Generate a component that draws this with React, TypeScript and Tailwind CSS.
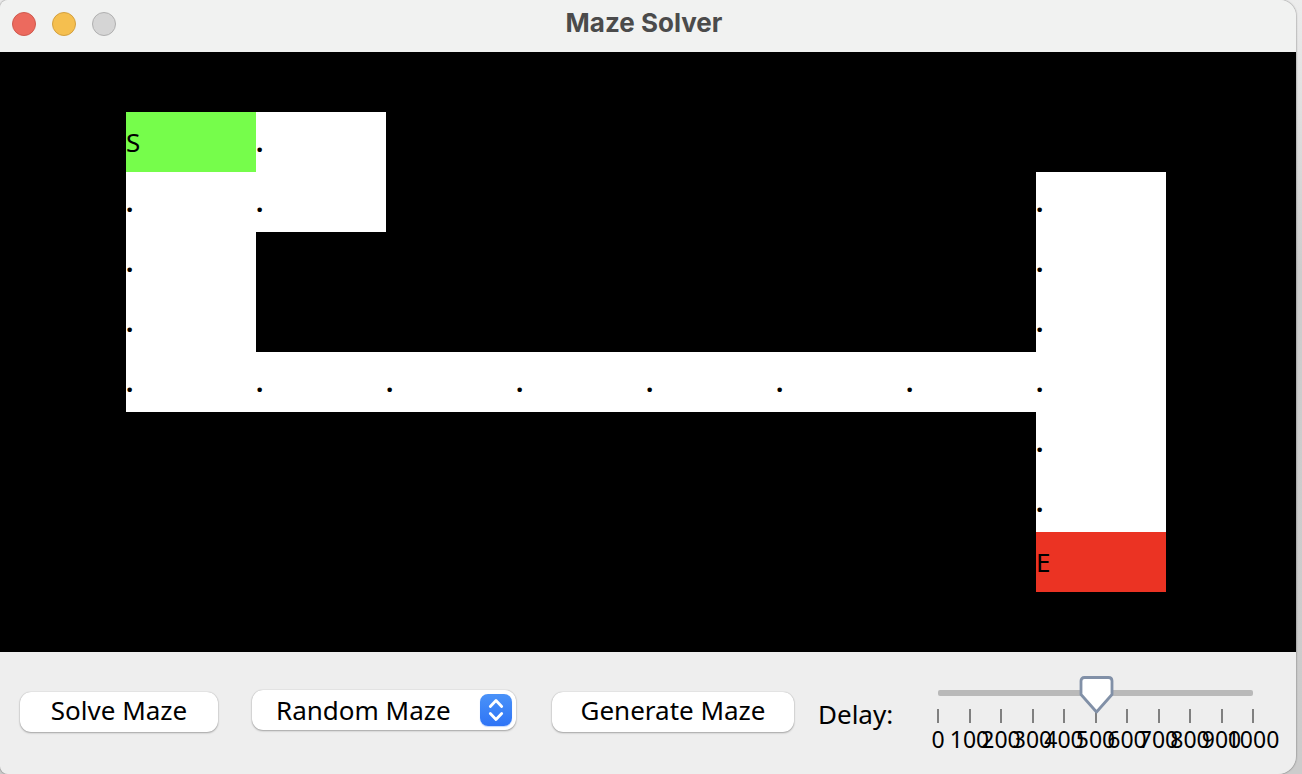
import { useState } from "react";

const MAZE = [
  "##########",
  "#S.#######",
  "#..#####.#",
  "#.######.#",
  "#.######.#",
  "#........#",
  "########.#",
  "########.#",
  "########E#",
  "##########",
];

const CELL_STYLES: Record<string, string> = {
  "#": "bg-black",
  ".": "bg-white font-bold",
  S: "bg-[#76fd4b]",
  E: "bg-[#eb3323]",
};

const TICKS = [0, 100, 200, 300, 400, 500, 600, 700, 800, 900, 1000];

function TitleBar() {
  return (
    <header className="grid h-[52px] shrink-0 grid-cols-[1fr_auto_1fr] items-center bg-[#f1f2f1] pr-2 pb-1">
      <div className="flex gap-4 pl-3">
        <button aria-label="Close" className="size-6 rounded-full border border-[#cf5a4e] bg-[#ec6a5e]" />
        <button aria-label="Minimize" className="size-6 rounded-full border border-[#d3a040] bg-[#f5bf4f]" />
        <button aria-label="Zoom" className="size-6 rounded-full border border-[#b0b0b0] bg-[#d5d5d5]" />
      </div>
      <h1 className="pb-[2px] font-['Inter',sans-serif] text-[26px] leading-8 font-bold text-[#4b4b4b]">Maze Solver</h1>
    </header>
  );
}

function MazeBoard() {
  return (
    <main className="grid min-h-[600px] flex-1 auto-rows-fr grid-cols-[126fr_repeat(9,130fr)] bg-black">
      {MAZE.flatMap((row, y) =>
        row.split("").map((cell, x) => (
          <div key={`${y}-${x}`} className={`flex items-center ${CELL_STYLES[cell]}`}>
            {cell === "#" ? "" : cell}
          </div>
        )),
      )}
    </main>
  );
}

function DelaySlider() {
  const [delay, setDelay] = useState(500);
  return (
    <div className="relative mt-6 mr-[43px] ml-[42px] h-20 flex-1">
      <div className="flex h-[33px] items-center">
        <div className="h-[6px] w-full rounded-[2px] bg-[#b9b9b9]" />
      </div>
      <div className="flex justify-between">
        {TICKS.map((tick) => (
          <div key={tick} className="flex w-0 flex-col items-center">
            <span className="h-[14px] w-[2px] bg-[#808080]" />
            <span className="mt-[2px] text-[23px] leading-7">{tick}</span>
          </div>
        ))}
      </div>
      <svg
        className="absolute top-0 -ml-[17px] h-[38px] w-[36px]"
        style={{ left: `${delay / 10}%` }}
        viewBox="0 0 36 38"
        aria-hidden="true"
      >
        <path
          d="M5.500 1.500h24q3.500 0 3.500 3.500v13.500L17.500 36 2 18.500V5q0-3.500 3.500-3.500z"
          fill="#fff"
          stroke="#8190a7"
          strokeWidth="2.800"
          strokeLinejoin="round"
        />
      </svg>
      <input
        id="delay"
        type="range"
        min={0}
        max={1000}
        value={delay}
        onChange={(e) => setDelay(Number(e.target.value))}
        className="absolute inset-x-0 top-0 h-9 w-full opacity-0"
      />
    </div>
  );
}

const BUTTON =
  "mt-10 h-10 shrink-0 rounded-[11px] bg-white pb-1 leading-9 shadow-[0_1px_2px_rgba(0,0,0,0.3),0_0_1px_rgba(0,0,0,0.3)]";

function Controls() {
  return (
    <footer className="flex h-[122px] shrink-0 items-start bg-[#eeeeee] pl-5">
      <button className={`${BUTTON} w-[198px]`}>Solve Maze</button>
      <div className="relative mt-[38px] ml-[34px] w-[264px] shrink-0">
        <select
          aria-label="Maze type"
          className="block h-10 w-full appearance-none rounded-[11px] bg-white pr-12 pl-6 shadow-[0_1px_2px_rgba(0,0,0,0.3),0_0_1px_rgba(0,0,0,0.3)]"
        >
          <option>Random Maze</option>
        </select>
        <span className="pointer-events-none absolute top-1 right-1 flex size-8 items-center justify-center rounded-lg bg-linear-to-b from-[#4a92f8] to-[#2f74f6] shadow-[0_1px_1px_rgba(47,116,246,0.3)]">
          <svg className="size-8" viewBox="0 0 32 32" fill="none" stroke="#fff" strokeWidth="2.800" strokeLinecap="round" strokeLinejoin="round" aria-hidden="true">
            <path d="M10.300 12.500 16 6.500l5.700 6M10.300 19.500l5.700 6 5.700-6" />
          </svg>
        </span>
      </div>
      <button className={`${BUTTON} ml-9 w-[242px]`}>Generate Maze</button>
      <label htmlFor="delay" className="mt-[42px] ml-6 w-[78px] shrink-0 leading-10">
        Delay:
      </label>
      <DelaySlider />
    </footer>
  );
}

export default function App() {
  return (
    <div className="min-h-screen bg-linear-to-b from-[#ececec] via-[#cdcdcd] via-35% to-[#cccccc] pr-[6px] font-['Noto_Sans',sans-serif] text-[26px] leading-10 text-black">
      <div className="flex min-h-screen flex-col overflow-hidden rounded-tl-[8px] rounded-tr-2xl rounded-br-[18px] rounded-bl-lg shadow-[0_0_2px_rgba(0,0,0,0.6)]">
        <TitleBar />
        <MazeBoard />
        <Controls />
      </div>
    </div>
  );
}
